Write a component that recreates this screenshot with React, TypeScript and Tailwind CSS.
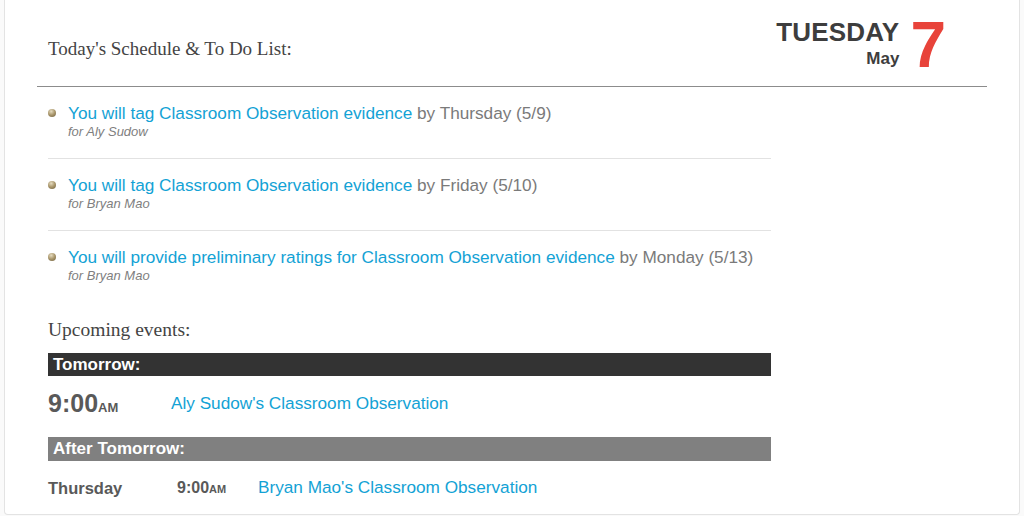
import React from 'react';

const sans = "font-['Liberation_Sans',Arial,sans-serif]";
const serif = "font-['Liberation_Serif','Times_New_Roman',serif]";

interface Task {
  action: string;
  due: string;
  who: string;
}

const tasks: Task[] = [
  { action: 'You will tag Classroom Observation evidence', due: 'by Thursday (5/9)', who: 'for Aly Sudow' },
  { action: 'You will tag Classroom Observation evidence', due: 'by Friday (5/10)', who: 'for Bryan Mao' },
  { action: 'You will provide preliminary ratings for Classroom Observation evidence', due: 'by Monday (5/13)', who: 'for Bryan Mao' },
];

function Bullet() {
  return <span className="mt-[6px] w-[8px] h-[8px] rounded-full shrink-0 bg-[radial-gradient(circle_at_40%_30%,#e6dcc0_0%,#a8956a_50%,#6f6040_100%)]" />;
}

function TaskRow({ task, last }: { task: Task; last: boolean }) {
  return (
    <li className={`flex gap-[12px] pt-[16px] ${last ? 'pb-[34px]' : 'pb-[18px] border-b border-[#e2e2e2]'}`}>
      <Bullet />
      <div>
        <p className="text-[17.2px] leading-[20px]">
          <a className="text-[#13a2d5]">{task.action}</a> <span className="text-[#7a7a7a]">{task.due}</span>
        </p>
        <p className="text-[13px] leading-[16px] italic text-[#808080] mt-[1px]">{task.who}</p>
      </div>
    </li>
  );
}

export default function App() {
  return (
    <div className={`h-[516px] bg-[#fafafa] pl-[4px] pr-[4px] ${sans}`}>
      <div className="h-[515px] bg-white border border-t-0 border-[#e3e3e3] rounded-b-[4px]">
        <div className="mx-[32px] h-[87px] border-b border-[#8c8c8c] flex justify-between">
          <h2 className={`pt-[37px] pl-[11px] text-[19px] leading-[24px] text-[#444] ${serif}`}>Today's Schedule &amp; To Do List:</h2>
          <div className="flex gap-[11px] pt-[17px] pr-[41px]">
            <div className="flex flex-col items-end">
              <span className="text-[26px] leading-[30px] font-bold text-[#3d3d3d] tracking-[0.2px]">TUESDAY</span>
              <span className="text-[17px] leading-[20px] font-bold text-[#3d3d3d] mt-[2px]">May</span>
            </div>
            <span className="text-[64px] leading-[60px] font-bold text-[#e8433a] mt-[-2px]">7</span>
          </div>
        </div>

        <div className="ml-[43px] w-[723px]">
          <ul>
            {tasks.map((t, i) => <TaskRow key={i} task={t} last={i === tasks.length - 1} />)}
          </ul>

          <h3 className={`text-[19.5px] leading-[24px] text-[#444] ${serif}`}>Upcoming events:</h3>

          <div className="mt-[11px] h-[23px] bg-[#333] text-white font-bold text-[17px] leading-[23px] pl-[5px]">Tomorrow:</div>
          <div className="h-[61px] flex items-center pb-[6px]">
            <span className="w-[123px] font-bold text-[#595959]"><span className="text-[25px]">9:00</span><span className="text-[13px]">AM</span></span>
            <a className="text-[17.2px] text-[#13a2d5]">Aly Sudow's Classroom Observation</a>
          </div>

          <div className="h-[24px] bg-[#808080] text-white font-bold text-[17px] leading-[24px] pl-[5px]">After Tomorrow:</div>
          <div className="h-[54px] flex items-center">
            <span className="w-[129px] font-bold text-[16.5px] text-[#595959]">Thursday</span>
            <span className="w-[81px] font-bold text-[#595959]"><span className="text-[16px]">9:00</span><span className="text-[11px]">AM</span></span>
            <a className="text-[17.2px] text-[#13a2d5]">Bryan Mao's Classroom Observation</a>
          </div>
        </div>
      </div>
    </div>
  );
}
